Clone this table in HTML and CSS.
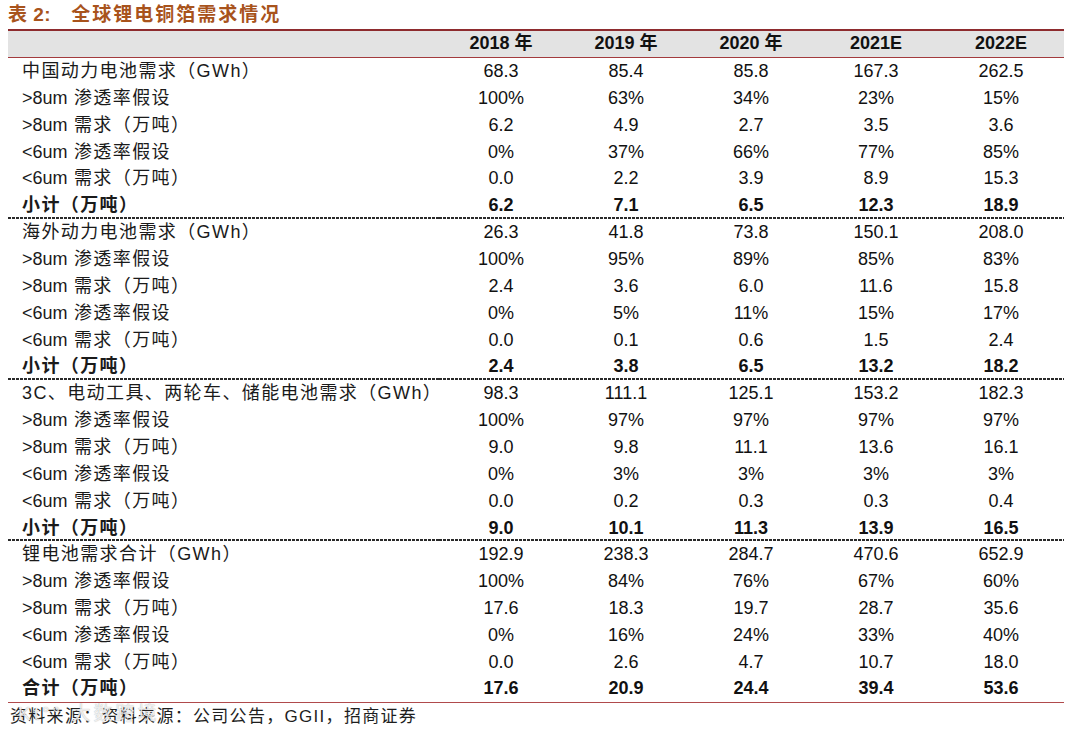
FILE: index.html
```html
<!DOCTYPE html>
<html lang="zh-CN">
<head>
<meta charset="utf-8">
<title>表2：全球锂电铜箔需求情况</title>
<link rel="stylesheet" href="styles.css">
</head>
<body>
<div class="page">
  <h1 class="title"><span class="num">表 2:</span><span class="ttext">全球锂电铜箔需求情况</span></h1>
  <table class="data">
    <colgroup>
      <col class="c-label"><col class="c-val"><col class="c-val"><col class="c-val"><col class="c-val"><col class="c-val">
    </colgroup>
    <thead>
      <tr><th></th><th>2018 年</th><th>2019 年</th><th>2020 年</th><th>2021E</th><th>2022E</th></tr>
    </thead>
    <tbody>
      <tr><td>中国动力电池需求（GWh）</td><td>68.3</td><td>85.4</td><td>85.8</td><td>167.3</td><td>262.5</td></tr>
      <tr><td><span class="lat">&gt;8um</span> 渗透率假设</td><td>100%</td><td>63%</td><td>34%</td><td>23%</td><td>15%</td></tr>
      <tr><td><span class="lat">&gt;8um</span> 需求（万吨）</td><td>6.2</td><td>4.9</td><td>2.7</td><td>3.5</td><td>3.6</td></tr>
      <tr><td><span class="lat">&lt;6um</span> 渗透率假设</td><td>0%</td><td>37%</td><td>66%</td><td>77%</td><td>85%</td></tr>
      <tr><td><span class="lat">&lt;6um</span> 需求（万吨）</td><td>0.0</td><td>2.2</td><td>3.9</td><td>8.9</td><td>15.3</td></tr>
      <tr class="sub sep"><td>小计（万吨）</td><td>6.2</td><td>7.1</td><td>6.5</td><td>12.3</td><td>18.9</td></tr>

      <tr><td>海外动力电池需求（GWh）</td><td>26.3</td><td>41.8</td><td>73.8</td><td>150.1</td><td>208.0</td></tr>
      <tr><td><span class="lat">&gt;8um</span> 渗透率假设</td><td>100%</td><td>95%</td><td>89%</td><td>85%</td><td>83%</td></tr>
      <tr><td><span class="lat">&gt;8um</span> 需求（万吨）</td><td>2.4</td><td>3.6</td><td>6.0</td><td>11.6</td><td>15.8</td></tr>
      <tr><td><span class="lat">&lt;6um</span> 渗透率假设</td><td>0%</td><td>5%</td><td>11%</td><td>15%</td><td>17%</td></tr>
      <tr><td><span class="lat">&lt;6um</span> 需求（万吨）</td><td>0.0</td><td>0.1</td><td>0.6</td><td>1.5</td><td>2.4</td></tr>
      <tr class="sub sep"><td>小计（万吨）</td><td>2.4</td><td>3.8</td><td>6.5</td><td>13.2</td><td>18.2</td></tr>

      <tr><td>3C、电动工具、两轮车、储能电池需求（GWh）</td><td>98.3</td><td>111.1</td><td>125.1</td><td>153.2</td><td>182.3</td></tr>
      <tr><td><span class="lat">&gt;8um</span> 渗透率假设</td><td>100%</td><td>97%</td><td>97%</td><td>97%</td><td>97%</td></tr>
      <tr><td><span class="lat">&gt;8um</span> 需求（万吨）</td><td>9.0</td><td>9.8</td><td>11.1</td><td>13.6</td><td>16.1</td></tr>
      <tr><td><span class="lat">&lt;6um</span> 渗透率假设</td><td>0%</td><td>3%</td><td>3%</td><td>3%</td><td>3%</td></tr>
      <tr><td><span class="lat">&lt;6um</span> 需求（万吨）</td><td>0.0</td><td>0.2</td><td>0.3</td><td>0.3</td><td>0.4</td></tr>
      <tr class="sub sep"><td>小计（万吨）</td><td>9.0</td><td>10.1</td><td>11.3</td><td>13.9</td><td>16.5</td></tr>

      <tr><td>锂电池需求合计（GWh）</td><td>192.9</td><td>238.3</td><td>284.7</td><td>470.6</td><td>652.9</td></tr>
      <tr><td><span class="lat">&gt;8um</span> 渗透率假设</td><td>100%</td><td>84%</td><td>76%</td><td>67%</td><td>60%</td></tr>
      <tr><td><span class="lat">&gt;8um</span> 需求（万吨）</td><td>17.6</td><td>18.3</td><td>19.7</td><td>28.7</td><td>35.6</td></tr>
      <tr><td><span class="lat">&lt;6um</span> 渗透率假设</td><td>0%</td><td>16%</td><td>24%</td><td>33%</td><td>40%</td></tr>
      <tr><td><span class="lat">&lt;6um</span> 需求（万吨）</td><td>0.0</td><td>2.6</td><td>4.7</td><td>10.7</td><td>18.0</td></tr>
      <tr class="sub last"><td>合计（万吨）</td><td>17.6</td><td>20.9</td><td>24.4</td><td>39.4</td><td>53.6</td></tr>
    </tbody>
  </table>
  <div class="footer">
    <p class="source">资料来源：资料来源：公司公告，GGII，招商证券</p>
    <span class="watermark">Kt°° 大数跨境</span>
  </div>
</div>
</body>
</html>
```

FILE: styles.css
```css
* { box-sizing: border-box; }
html, body { margin: 0; padding: 0; background: #ffffff; }
body {
  font-family: "Liberation Sans", Arial, "Noto Sans CJK SC", sans-serif;
  color: #111111;
}
.page {
  width: 1080px;
  height: 730px;
  padding-left: 8px;
  overflow: hidden;
}
.title {
  margin: 0;
  height: 29px;
  line-height: 29px;
  font-size: 19px;
  font-weight: bold;
  color: #a8531c;
  font-family: "Liberation Sans", "Noto Sans CJK SC", sans-serif;
  white-space: nowrap;
}
.title .num { margin-right: 20px; letter-spacing: 0.5px; }
.title .ttext { letter-spacing: 2px; }

.data {
  width: 1055.5px;
  border-collapse: collapse;
  table-layout: fixed;
  font-size: 18px;
}
.c-label { width: 430.5px; }
.c-val { width: 125px; }

.data th {
  height: 27.5px;
  padding: 0 0 2px;
  background: #e3e3e3;
  border-top: 2px solid #8e2b2e;
  border-bottom: 1.5px solid #a33b3d;
  font-weight: bold;
  text-align: center;
  line-height: 20px;
  font-family: "Liberation Sans", "Noto Sans CJK SC", sans-serif;
  color: #111;
}
.data td {
  height: 26.87px;
  padding: 0;
  text-align: center;
  white-space: nowrap;
  line-height: 20px;
}
.data td:first-child {
  text-align: left;
  padding-left: 14px;
  letter-spacing: 1.4px;
  font-family: "Liberation Sans", "Noto Sans CJK SC", sans-serif;
  color: #1a1a1a;
}
.data td:first-child .lat { letter-spacing: 0; }
.data tr.sub td { font-weight: bold; }
.data tr.sep td {
  background-image: linear-gradient(90deg, #2a2a2a 3px, transparent 3px);
  background-size: 4px 2px;
  background-repeat: repeat-x;
  background-position: left bottom;
}
.data tr.last td {
  border-bottom: 1.5px solid #b04a4c;
}

.footer {
  position: relative;
  height: 27px;
}
.source {
  margin: 0;
  padding-left: 2px;
  line-height: 27px;
  font-size: 17px;
  letter-spacing: 1.3px;
  color: #1e1e1e;
  font-family: "Liberation Sans", "Noto Sans CJK SC", sans-serif;
}
.watermark {
  position: absolute;
  left: 10px;
  top: -5px;
  font-size: 19px;
  letter-spacing: 3px;
  color: rgba(255, 255, 255, 0.8);
  text-shadow: 0 0 1px rgba(100, 100, 100, 0.6);
  font-family: "Liberation Sans", "Noto Sans CJK SC", sans-serif;
  pointer-events: none;
}
```
